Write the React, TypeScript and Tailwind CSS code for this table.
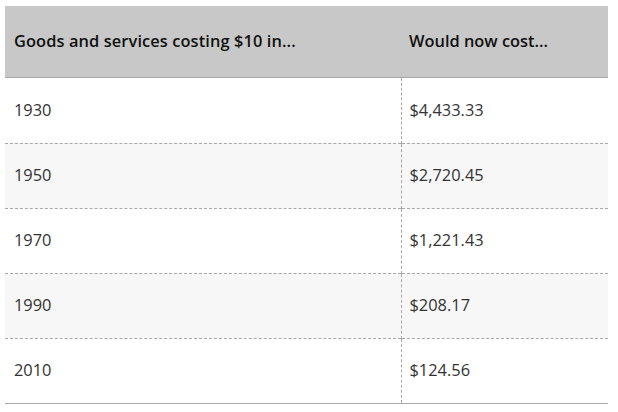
const ROWS = [
  { year: "1930", cost: "$4,433.33" },
  { year: "1950", cost: "$2,720.45" },
  { year: "1970", cost: "$1,221.43" },
  { year: "1990", cost: "$208.17" },
  { year: "2010", cost: "$124.56" },
];

export default function App() {
  return (
    <div className="min-h-screen bg-white pl-[5px] pt-[6px] font-['Open_Sans',sans-serif]">
      <table className="w-[603px] border-collapse text-left text-[16.4px]">
        <thead className="bg-[#c8c8c8] text-[#111]">
          <tr className="border-b border-[#a8a8a8]">
            <th className="h-[71px] w-[396px] px-[9px] font-semibold tracking-[0.1px]">Goods and services costing $10 in...</th>
            <th className="h-[71px] px-[8px] font-semibold">Would now cost...</th>
          </tr>
        </thead>
        <tbody className="text-[#333]">
          {ROWS.map((r, i) => (
            <tr key={r.year}
              className={`${i % 2 === 1 ? "bg-[#f7f7f7]" : "bg-white"} ${i === ROWS.length - 1 ? "border-b border-solid border-[#a8a8a8]" : "border-b border-dashed border-[#a8a8a8]"}`}>
              <td className={`${i === 0 ? "h-[66px]" : "h-[65px]"} border-r border-dashed border-[#a8a8a8] px-[9px]`}>{r.year}</td>
              <td className="px-[8px]">{r.cost}</td>
            </tr>
          ))}
        </tbody>
      </table>
    </div>
  );
}
